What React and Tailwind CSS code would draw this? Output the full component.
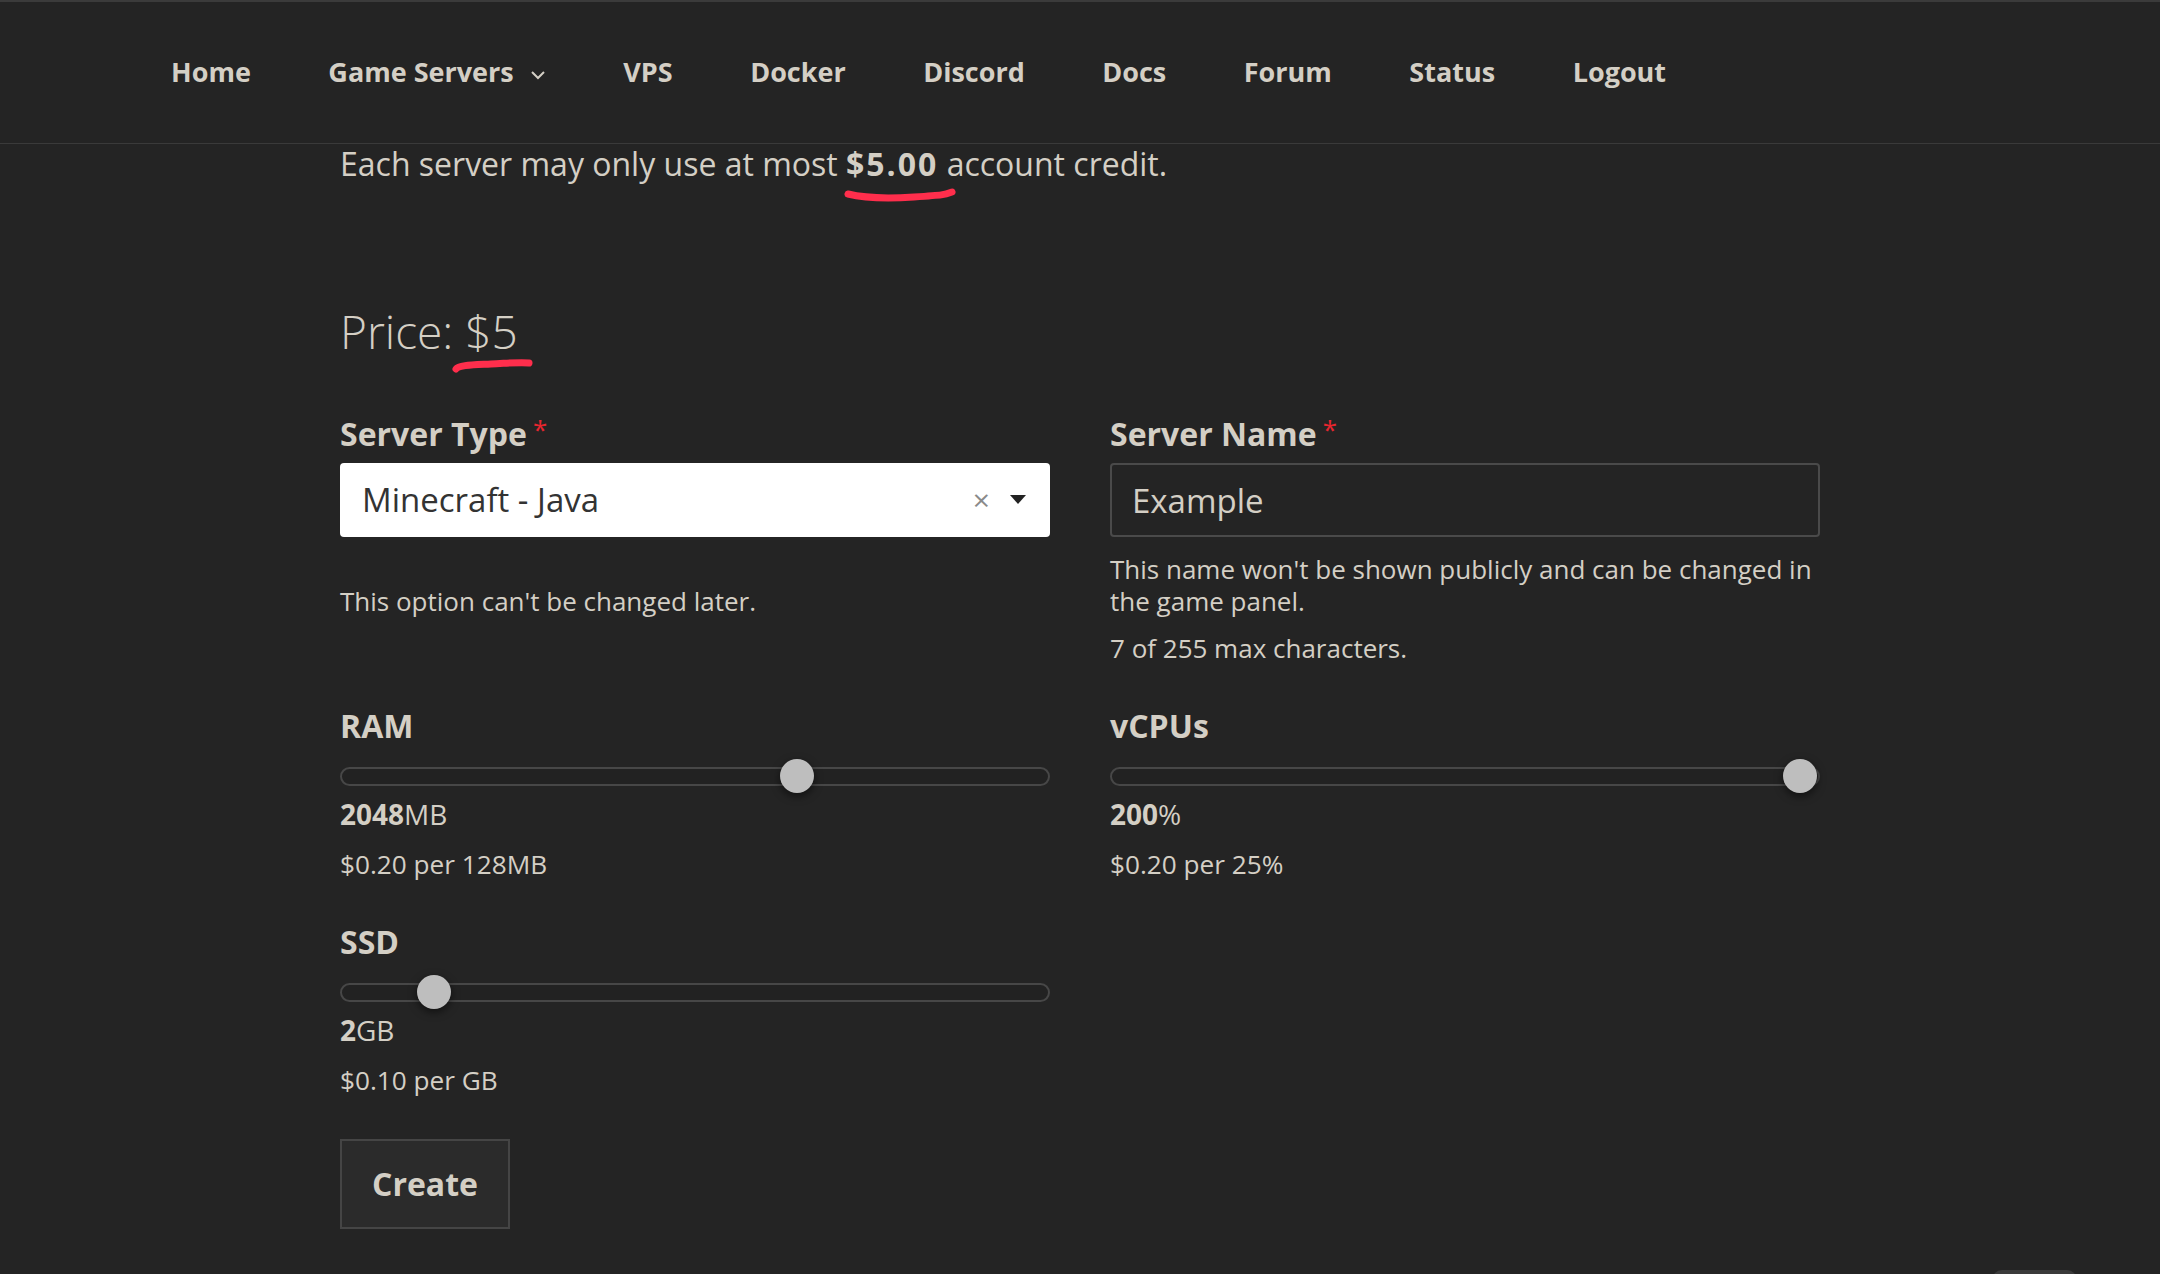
import { useState } from "react";

const navLinks = ["Home", "Game Servers", "VPS", "Docker", "Discord", "Docs", "Forum", "Status", "Logout"];

// red hand-drawn marks from the screenshot
function Scribble({ className, d, w, h }) {
    return (
        <svg className={className} width={w} height={h} viewBox={`0 0 ${w} ${h}`} fill="none">
            <path d={d} stroke="#ff2e4c" strokeWidth="7" strokeLinecap="round" strokeLinejoin="round" />
        </svg>
    );
}

function Slider({ pos }) {
    return (
        <div className="relative flex h-[34px] items-center">
            <div className="h-[19px] w-full rounded-full border-2 border-[#474747] bg-[#222222]" />
            <div
                className="absolute top-0 h-[34px] w-[34px] rounded-full bg-[#bebebe] shadow-[0_3px_8px_rgba(0,0,0,0.55)]"
                style={{ left: `calc((100% - 34px) * ${pos})` }}
            />
        </div>
    );
}

function Resource({ label, amount, unit, price, pos }) {
    return (
        <div className="flex flex-col">
            <div className="text-[32px] font-bold leading-[40px]">{label}</div>
            <div className="mt-[13px]">
                <Slider pos={pos} />
            </div>
            <div className="mt-[5px] text-[28px] leading-[32px]">
                <span className="font-bold">{amount}</span>
                {unit}
            </div>
            <div className="mt-[18px] text-[26.2px] leading-[32px]">{price}</div>
        </div>
    );
}

function Label({ children }) {
    return (
        <div className="flex items-start text-[32px] font-bold leading-[40px]">
            {children}
            <span className="ml-[6px] text-[26px] font-normal leading-[30px] text-[#e8262f]">*</span>
        </div>
    );
}

export default function App() {
    const [name, setName] = useState("Example");

    return (
        <div className="min-h-screen bg-[#242424] text-[#d4cfc5] [font-family:'Open_Sans',sans-serif]">
            {/* Barra de navegación */}
            <nav className="flex h-[144px] items-center border-t-2 border-b border-t-[#3b3b3b] border-b-[#3a3a3a] pl-[171px]">
                <ul className="flex items-center gap-[77.5px] text-[27px] font-bold">
                    {navLinks.map((link) => (
                        <li key={link} className="flex items-center gap-[16px]">
                            <span>{link}</span>
                            {link === "Game Servers" && (
                                <svg width="16" height="10" viewBox="0 0 16 10" fill="none" className="mt-[4px]">
                                    <polyline points="2,2 8,8 14,2" stroke="#d4cfc5" strokeWidth="2" />
                                </svg>
                            )}
                        </li>
                    ))}
                </ul>
            </nav>

            <main className="mx-auto w-[1480px] pb-[45px]">
                <p className="text-[32px] leading-[40px]">
                    Each server may only use at most{" "}
                    <span className="relative font-bold tracking-[2px]">
                        $5.00
                        <Scribble
                            className="absolute left-[-2px] top-[45px]"
                            w={114}
                            h={16}
                            d="M4 7 C 20 11, 40 12, 70 10 S 100 8, 108 5"
                        />
                    </span>{" "}
                    account credit.
                </p>

                <h2 className="mt-[117px] text-[46px] font-light leading-[60px]">
                    Price:{" "}
                    <span className="relative">
                        $5
                        <Scribble
                            className="absolute left-[-14px] top-[56px]"
                            w={84}
                            h={18}
                            d="M5 13 C 8 9, 20 9, 40 8 S 70 6, 78 7"
                        />
                    </span>
                </h2>

                <div className="mt-[53px] grid grid-cols-2 gap-x-[60px] gap-y-[42px]">
                    {/* Tipo de servidor */}
                    <div className="flex flex-col">
                        <Label>Server Type</Label>
                        <div className="mt-[9px] flex h-[74px] items-center rounded-[4px] bg-white pl-[22px] pr-[24px] text-[#333333]">
                            <span className="flex-1 text-[33px]">Minecraft - Java</span>
                            <span className="mr-[20px] text-[30px] leading-none text-[#8a8a8a]">×</span>
                            <svg width="16" height="10" viewBox="0 0 16 10">
                                <polygon points="0,0 16,0 8,9" fill="#222222" />
                            </svg>
                        </div>
                        <p className="mt-[48px] text-[26px] leading-[32px]">This option can't be changed later.</p>
                    </div>

                    {/* Nombre del servidor */}
                    <div className="flex flex-col">
                        <Label>Server Name</Label>
                        <input
                            className="mt-[9px] h-[74px] rounded-[4px] border-2 border-[#4a4a4a] bg-transparent px-[20px] text-[33px] text-[#d4cfc5] outline-none"
                            value={name}
                            onChange={(e) => setName(e.target.value)}
                        />
                        <p className="mt-[16px] pr-[8px] text-[26px] leading-[32px]">
                            This name won't be shown publicly and can be changed in the game panel.
                        </p>
                        <p className="mt-[15px] text-[26px] leading-[32px]">{name.length} of 255 max characters.</p>
                    </div>

                    <Resource label="RAM" amount="2048" unit="MB" price="$0.20 per 128MB" pos={0.651} />
                    <Resource label="vCPUs" amount="200" unit="%" price="$0.20 per 25%" pos={0.996} />
                    <Resource label="SSD" amount="2" unit="GB" price="$0.10 per GB" pos={0.114} />
                </div>

                <button className="mt-[43px] h-[90px] w-[170px] border-2 border-[#454545] bg-[#2b2b2b] text-[32px] font-bold text-[#d4cfc5]">
                    Create
                </button>
            </main>

            {/* botón "volver arriba" que asoma abajo */}
            <div className="fixed bottom-[-40px] right-[83px] h-[44px] w-[85px] rounded-[10px] bg-[#3a3a3a]" />
        </div>
    );
}
